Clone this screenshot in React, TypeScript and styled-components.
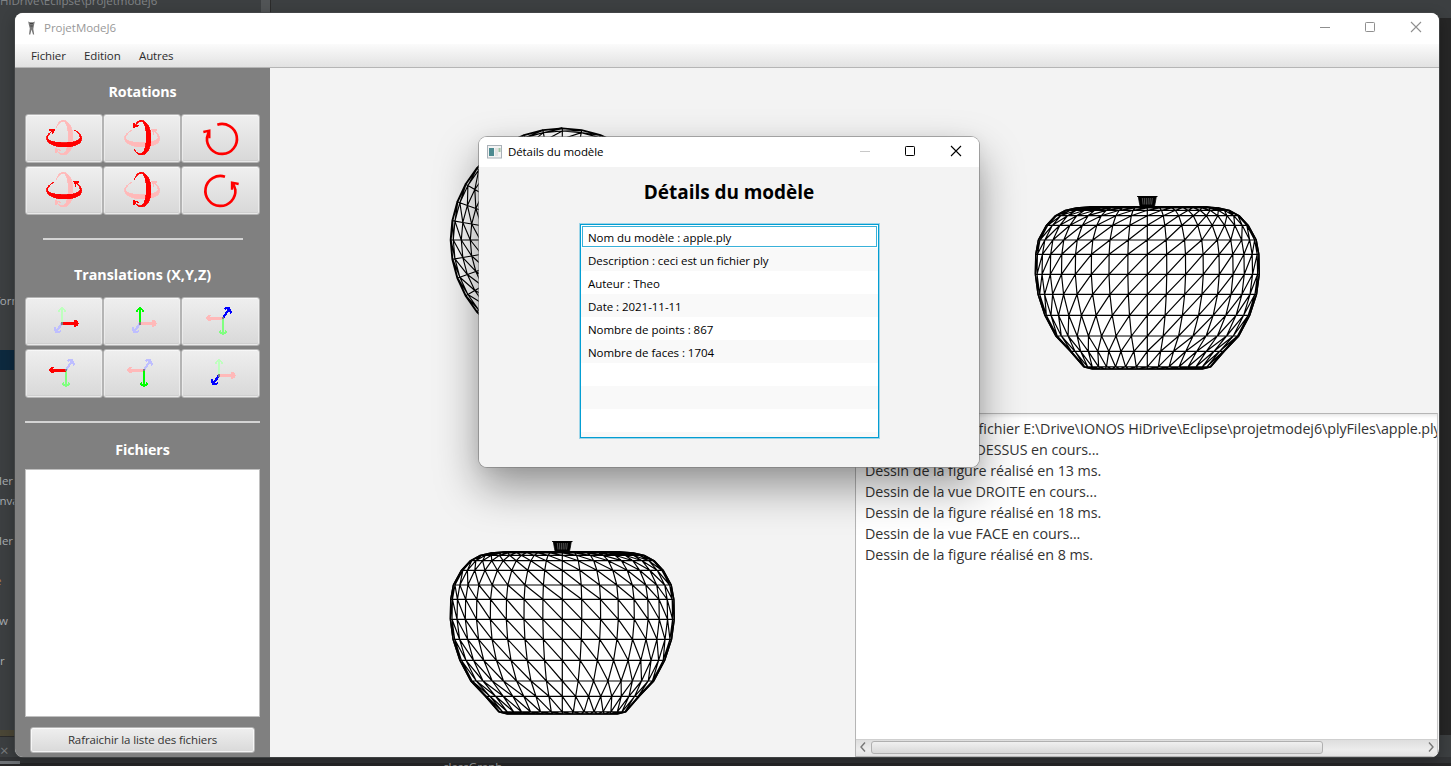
import React from "react";
import styled, { createGlobalStyle } from "styled-components";

const GlobalStyle = createGlobalStyle`
  * { box-sizing: border-box; }
  body { margin: 0; overflow: hidden; font-family: "Open Sans", "Noto Sans", sans-serif; }
`;

/* ---------- desktop behind the windows ---------- */

const Desktop = styled.div`
  position: relative;
  width: 1451px;
  height: 766px;
  overflow: hidden;
  background: #3c3f41;
`;

const BackPanel = styled.div<{ $x: number; $y: number; $w: number; $h: number; $c: string }>`
  position: absolute;
  left: ${(p) => p.$x}px;
  top: ${(p) => p.$y}px;
  width: ${(p) => p.$w}px;
  height: ${(p) => p.$h}px;
  background: ${(p) => p.$c};
`;

const BackText = styled.span<{ $x: number; $y: number; $c?: string; $size?: number }>`
  position: absolute;
  left: ${(p) => p.$x}px;
  top: ${(p) => p.$y}px;
  line-height: 16px;
  white-space: nowrap;
  font-size: ${(p) => p.$size ?? 11.5}px;
  color: ${(p) => p.$c ?? "#a9adb0"};
`;

/* ---------- main window ---------- */

const Window = styled.main`
  position: absolute;
  left: 15px;
  top: 13px;
  width: 1424px;
  height: 744px;
  display: flex;
  flex-direction: column;
  overflow: hidden;
  border-radius: 8px;
  background: #f3f3f3;
`;

const WindowShade = styled.div`
  position: absolute;
  left: 15px;
  top: 13px;
  width: 1424px;
  height: 744px;
  border-radius: 8px;
  box-shadow: 0 0 0 1px rgba(70, 72, 74, 0.8), 0 4px 14px rgba(0, 0, 0, 0.3);
`;

const TitleBar = styled.header<{ $h: number; $pb?: number }>`
  flex: none;
  height: ${(p) => p.$h}px;
  padding-bottom: ${(p) => p.$pb ?? 0}px;
  display: flex;
  align-items: center;
  background: #fff;
`;

const WindowTitle = styled.span<{ $active?: boolean }>`
  flex: 1;
  font-size: 11.5px;
  line-height: 16px;
  letter-spacing: ${(p) => (p.$active ? "-0.1px" : "-0.02px")};
  color: ${(p) => (p.$active ? "#000" : "#999")};
`;

const Controls = styled.div`
  display: flex;
  svg { display: block; }
`;

const MenuBar = styled.nav`
  flex: none;
  height: 24px;
  display: flex;
  gap: 18px;
  padding: 0 16px;
  background: linear-gradient(#fbfbfb, #e2e2e2);
  border-bottom: 1px solid #b5b5b5;
`;

const MenuItem = styled.span<{ $w: number }>`
  width: ${(p) => p.$w}px;
  font-size: 11.5px;
  line-height: 24px;
  white-space: nowrap;
  letter-spacing: -0.1px;
  color: #2c2c2c;
`;

const Body = styled.div`
  flex: 1;
  min-height: 0;
  display: flex;
`;

const Sidebar = styled.aside`
  flex: none;
  width: 255px;
  padding: 12px 10px 4px;
  display: flex;
  flex-direction: column;
  align-items: center;
  background: #808080;
`;

const Heading = styled.h2<{ $mb: number; $ls?: number }>`
  margin: 0 0 ${(p) => p.$mb}px;
  height: 24px;
  font-size: 14.3px;
  line-height: 24px;
  font-weight: 700;
  letter-spacing: ${(p) => p.$ls ?? -0.1}px;
  color: #fff;
`;

const ButtonGrid = styled.div`
  display: grid;
  grid-template-columns: 78px 78px 79px;
  row-gap: 3px;
`;

const ToolButton = styled.button`
  height: 49px;
  padding: 0;
  border: 1px solid #b4b4b4;
  border-radius: 3px;
  background: linear-gradient(#efefef, #d8d8d8);
  box-shadow: inset 0 0 0 1px rgba(255, 255, 255, 0.55), inset 0 -1px 0 1px rgba(180, 180, 180, 0.25);
  svg { display: block; margin: -1px; }
`;

const Separator = styled.hr<{ $w: number; $mt: number; $mb: number }>`
  flex: none;
  width: ${(p) => p.$w}px;
  height: 2px;
  margin: ${(p) => p.$mt}px 0 ${(p) => p.$mb}px;
  border: 0;
  background: #d4d4d4;
`;

const FileList = styled.div`
  width: 235px;
  height: 248px;
  border: 1px solid #c0c0c0;
  background: #fff;
`;

const RefreshButton = styled.button`
  width: 225px;
  height: 26px;
  margin-top: 10px;
  padding: 0 0 2px;
  border: 1px solid #b4b4b4;
  border-radius: 3px;
  background: linear-gradient(#efefef, #d9d9d9);
  box-shadow: inset 0 0 0 1px rgba(255, 255, 255, 0.7);
  font-family: inherit;
  font-size: 11.5px;
  letter-spacing: -0.1px;
  color: #333;
`;

const Views = styled.section`
  flex: 1;
  display: grid;
  grid-template-columns: 585px 584px;
  grid-template-rows: 345px 344px;
`;

const View = styled.div`
  overflow: hidden;
  svg { display: block; }
`;

const Console = styled.div`
  display: flex;
  flex-direction: column;
  margin-right: 1px;
  border: 1px solid #b5b5b5;
  border-right-color: #c8c8c8;
  background: #fff;
  overflow: hidden;
`;

const Log = styled.div`
  flex: 1;
  padding: 4px 0 0 9px;
  overflow: hidden;
  box-shadow: inset 0 4px 4px -3px rgba(0, 0, 0, 0.14);
`;

const LogLine = styled.div<{ $indent?: number }>`
  height: 21px;
  padding-left: ${(p) => p.$indent ?? 0}px;
  font-size: 14.3px;
  line-height: 21px;
  white-space: pre;
  letter-spacing: -0.06px;
  color: #333;
`;

const ScrollBar = styled.div`
  flex: none;
  height: 17px;
  display: flex;
  align-items: center;
  justify-content: space-between;
  padding: 0 3px 2px 4px;
  border-top: 1px solid #cfcfcf;
  background: linear-gradient(#dedede, #ececec 60%, #e2e2e2);
`;

const ScrollTrack = styled.div`
  flex: 1;
  margin: 0 5px;
`;

const ScrollThumb = styled.div`
  width: 452px;
  height: 13px;
  border: 1px solid #b0b0b0;
  border-radius: 3px;
  background: linear-gradient(#f0f0f0, #d8d8d8);
`;

/* ---------- dialog ---------- */

const Dialog = styled.section`
  position: absolute;
  left: 479px;
  top: 137px;
  width: 500px;
  height: 330px;
  display: flex;
  flex-direction: column;
  align-items: stretch;
  border-radius: 8px;
  overflow: hidden;
  background: #f3f3f3;
`;

const DialogShade = styled.div`
  position: absolute;
  left: 479px;
  top: 137px;
  width: 500px;
  height: 330px;
  border-radius: 8px;
  box-shadow: 0 0 0 1px rgba(120, 120, 120, 0.6), 0 20px 44px rgba(0, 0, 0, 0.4), 0 2px 16px rgba(0, 0, 0, 0.06);
`;

const DialogHeading = styled.h1`
  margin: 10px 0 17px;
  font-size: 19px;
  line-height: 30px;
  font-weight: 700;
  text-align: center;
  letter-spacing: -0.05px;
  color: #000;
`;

const DetailList = styled.ul`
  width: 299px;
  height: 214px;
  margin: 0 0 0 101px;
  padding: 0;
  list-style: none;
  overflow: hidden;
  border: 1px solid #039ed3;
  box-shadow: 0 0 0 1px rgba(3, 158, 211, 0.35);
  background: #fff;
`;

const DetailRow = styled.li<{ $odd: boolean; $focused: boolean }>`
  height: 23px;
  padding: 1px;
  background: ${(p) => (p.$odd ? "#f9f9f9" : "#fff")};
  span {
    display: block;
    height: 21px;
    padding-left: 5px;
    border: 1px solid ${(p) => (p.$focused ? "#39b1d9" : "transparent")};
    font-size: 11.5px;
    line-height: 22px;
    letter-spacing: -0.04px;
    color: #000;
  }
`;

/* ---------- wireframe model ---------- */

type Ring = [number, number];

/* height and radius of each ring of the apple, top to bottom */
const RINGS: Ring[] = [
  [21.8, 58], [22.8, 71], [25.3, 82], [30.7, 92], [40.3, 101],
  [55, 109], [69.3, 111.6], [89.3, 112], [109.3, 109.3], [130.3, 102.5],
  [151, 91.5], [166.3, 77], [181.8, 63.5], [184, 55],
];

const STEP = Math.PI / 18;
const fx = (n: number) => n.toFixed(2);

function sidePath(cx: number, top: number, dir: 1 | -1) {
  let d = "";
  const x = (r: number, j: number) => cx + dir * r * Math.sin(j * STEP);
  RINGS.forEach(([y, r], i) => {
    d += `M${fx(cx - r)} ${fx(top + y)}H${fx(cx + r)}`;
    const next = RINGS[i + 1];
    if (!next) return;
    for (let j = -9; j <= 9; j++) {
      d += `M${fx(x(r, j))} ${fx(top + y)}L${fx(x(next[1], j))} ${fx(top + next[0])}`;
      if (j > -9) d += `M${fx(x(r, j))} ${fx(top + y)}L${fx(x(next[1], j - 1))} ${fx(top + next[0])}`;
    }
  });
  return d;
}

function sideOutline(cx: number, top: number) {
  const right = RINGS.map(([y, r]) => `${fx(cx + r)} ${fx(top + y)}`);
  const left = [...RINGS].reverse().map(([y, r]) => `${fx(cx - r)} ${fx(top + y)}`);
  return `M${right.join("L")}L${left.join("L")}Z`;
}

function AppleSide({ cx, top, dir }: { cx: number; top: number; dir: 1 | -1 }) {
  const t = top + 11.5;
  const ribs = [-5, -3, -1, 1, 3, 5];
  return (
    <g fill="none" stroke="#000">
      <path d={sideOutline(cx, top)} fill="#fff" strokeWidth="1.3" />
      <path d={sidePath(cx, top, dir)} strokeWidth="1.2" />
      <path d={`M${cx - 58} ${top + 21.8}H${cx + 58}`} strokeWidth="1.6" />
      <path d={`M${cx - 10.2} ${t}H${cx + 10.2}`} strokeWidth="1" />
      <path d={`M${cx - 9} ${t}H${cx + 9}L${cx + 7.8} ${t + 7}L${cx + 7} ${t + 10.5}H${cx - 7}L${cx - 7.8} ${t + 7}Z`} fill="#000" strokeWidth="0.8" />
      {ribs.map((r) => (
        <path key={r} d={`M${cx + r} ${t + 1.5}L${cx + r * 0.85} ${t + 8}`} stroke="#8a8a8a" strokeWidth="0.6" />
      ))}
    </g>
  );
}

function AppleTop({ cx, cy }: { cx: number; cy: number }) {
  const radii = [112, 111.2, 109, 101, 92, 82, 71, 58, 44, 30, 18];
  const pt = (r: number, j: number) => `${fx(cx + r * Math.cos(j * STEP))} ${fx(cy + r * Math.sin(j * STEP))}`;
  let d = "";
  radii.forEach((r, i) => {
    d += "M" + Array.from({ length: 36 }, (_, j) => pt(r, j)).join("L") + "Z";
    const next = radii[i + 1];
    if (next === undefined) return;
    for (let j = 0; j < 36; j++) d += `M${pt(r, j)}L${pt(next, j)}M${pt(r, j)}L${pt(next, j - 1)}`;
  });
  return (
    <>
      <circle cx={cx} cy={cy} r={111.5} fill="#fff" />
      <path d={d} fill="none" stroke="#000" strokeWidth="1.15" />
    </>
  );
}

/* ---------- tool icons ---------- */

const RED = "#ff0000";
const PINK = "#ffb9b9";

const Glyph = ({ children, smooth }: { children: React.ReactNode; smooth?: boolean }) => (
  <svg width="78" height="49" viewBox="0 0 234 147" fill="none" shapeRendering={smooth ? "auto" : "crispEdges"}>{children}</svg>
);

function FlatOrbit({ color, arrow }: { color: string; arrow: "left" | "right" }) {
  return (
    <g>
      <path fill={color} stroke={color} strokeWidth="2.5" d="M87 48C74 54 63 64 65 76C68 92 95 99 117 99C145 99 170 92 170 74C170 62 158 53 148 48C158 56 167 64 165 72C162 81 145 86 117 86C90 86 70 81 68 72C67 62 78 54 87 48Z" />
      <path stroke={color} strokeWidth="4" d={arrow === "left" ? "M73 48H87L82 61M74 49L84 53" : "M162 48H148L153 61M161 49L151 53"} />
    </g>
  );
}

function TallOrbit({ color, arrow }: { color: string; arrow: "top" | "bottom" }) {
  return (
    <g>
      <path fill={color} stroke={color} strokeWidth="2.5" d="M94 41C98 26 106 19 115 19C132 19 144 45 144 72C144 98 134 123 116 123C104 123 97 116 94 104C98 115 106 121 115 119C125 114 130 95 130 70C130 45 125 24 115 22C107 22 100 30 94 41Z" />
      <path stroke={color} strokeWidth="4" d={arrow === "top" ? "M92 26V40L107 34M92 28L98 38" : "M92 118V104L107 109M92 116L98 106"} />
    </g>
  );
}

const Spin = ({ ccw }: { ccw?: boolean }) => (
  <Glyph smooth>
    {ccw ? (
      <g stroke={RED} strokeWidth="8">
        <path d="M132 32A45 45 0 1 0 163 71L157 54" />
        <path d="M173 54L153 50V71" strokeWidth="7" />
      </g>
    ) : (
      <g stroke={RED} strokeWidth="8">
        <path d="M109 32A45 45 0 1 1 78 71L83 54" />
        <path d="M67 54L85 50V73" strokeWidth="7" />
      </g>
    )}
  </Glyph>
);

type Dir = "up" | "down" | "left" | "right" | "ne" | "sw";
const ARROWS: Record<Dir, { dx: number; dy: number; wings: string }> = {
  up: { dx: 0, dy: -45, wings: "M-10 11L-7 4L0 0L7 4L10 11" },
  down: { dx: 0, dy: 48, wings: "M-10 -9L-6 -3L0 0L6 -3L10 -9" },
  left: { dx: -47, dy: 0, wings: "M10 -9L3 -5L0 0L3 5L10 9" },
  right: { dx: 47, dy: 0, wings: "M-10 -9L-3 -5L0 0L-3 5L-10 9" },
  ne: { dx: 19, dy: -28, wings: "M-15 1L-9 -2H-1L2 5L6 14" },
  sw: { dx: -18, dy: 26, wings: "M-3 -14L-2 -5L0 0L8 0L15 -3" },
};

function Axes({ x, y, axes }: { x: number; y: number; axes: [Dir, string][] }) {
  return (
    <Glyph>
      {axes.map(([dir, color]) => {
        const a = ARROWS[dir];
        return (
          <g key={dir} stroke={color} strokeWidth={dir === "left" || dir === "right" ? 9 : 7}>
            <path d={`M${x} ${y}l${a.dx} ${a.dy}`} />
            <path d={a.wings} strokeWidth="6" transform={`translate(${x + a.dx} ${y + a.dy})`} />
          </g>
        );
      })}
      <rect x={x - 3} y={y - 3} width="7" height="7" fill="#808080" />
    </Glyph>
  );
}

const PALE_GREEN = "#beffbe";
const LIGHT_GREEN = "#80ff80";
const GREEN = "#00ff00";
const PALE_BLUE = "#bebeff";
const BLUE = "#0000ff";

const rotationIcons = [
  <Glyph key="a"><TallOrbit color={PINK} arrow="bottom" /><FlatOrbit color={RED} arrow="left" /></Glyph>,
  <Glyph key="b"><FlatOrbit color={PINK} arrow="right" /><TallOrbit color={RED} arrow="top" /></Glyph>,
  <Spin key="c" />,
  <Glyph key="d"><TallOrbit color={PINK} arrow="bottom" /><FlatOrbit color={RED} arrow="right" /></Glyph>,
  <Glyph key="e"><FlatOrbit color={PINK} arrow="right" /><TallOrbit color={RED} arrow="bottom" /></Glyph>,
  <Spin key="f" ccw />,
];

const translationIcons = [
  <Axes key="a" x={111} y={79} axes={[["up", PALE_GREEN], ["sw", PALE_BLUE], ["right", RED]]} />,
  <Axes key="b" x={111} y={79} axes={[["right", PINK], ["sw", PALE_BLUE], ["up", GREEN]]} />,
  <Axes key="c" x={126} y={63} axes={[["left", PINK], ["down", LIGHT_GREEN], ["ne", BLUE]]} />,
  <Axes key="d" x={123} y={63} axes={[["ne", PALE_BLUE], ["down", LIGHT_GREEN], ["left", RED]]} />,
  <Axes key="e" x={123} y={63} axes={[["ne", PALE_BLUE], ["left", PINK], ["down", GREEN]]} />,
  <Axes key="f" x={114} y={79} axes={[["up", PALE_GREEN], ["right", PINK], ["sw", BLUE]]} />,
];

function CaptionButtons({ color, minColor }: { color: string; minColor: string }) {
  return (
    <Controls>
      <svg width="46" height="30" fill="none"><path d="M18 14.5H28" stroke={minColor} /></svg>
      <svg width="45" height="30" fill="none"><rect x="17.5" y="9.5" width="9" height="9" rx="0.8" stroke={color} /></svg>
      <svg width="46" height="30" fill="none"><path d="M18 9L28 19M28 9L18 19" stroke={color} strokeWidth="1.1" /></svg>
    </Controls>
  );
}

const AppIcon = styled.svg<{ $ml: number; $mr: number }>`
  flex: none;
  margin-left: ${(p) => p.$ml}px;
  margin-right: ${(p) => p.$mr}px;
`;

const details = [
  "Nom du modèle : apple.ply",
  "Description : ceci est un fichier ply",
  "Auteur : Theo",
  "Date : 2021-11-11",
  "Nombre de points : 867",
  "Nombre de faces : 1704",
  "", "", "", "",
];

const log = [
  "Dessin de la vue DESSUS en cours...",
  "Dessin de la figure réalisé en 13 ms.",
  "Dessin de la vue DROITE en cours...",
  "Dessin de la figure réalisé en 18 ms.",
  "Dessin de la vue FACE en cours...",
  "Dessin de la figure réalisé en 8 ms.",
];

export default function App() {
  return (
    <>
      <GlobalStyle />
      <Desktop>
        <BackPanel $x={261} $y={0} $w={9} $h={13} $c="#515456" />
        <BackPanel $x={270} $y={0} $w={1} $h={13} $c="#2b2b2b" />
        <BackPanel $x={1439} $y={18} $w={12} $h={717} $c="#262626" />
        <BackPanel $x={0} $y={350} $w={15} $h={20} $c="#0d293e" />
        <BackPanel $x={0} $y={730} $w={15} $h={6} $c="#4a4636" />
        <BackPanel $x={0} $y={736} $w={15} $h={1} $c="#2b2b2b" />
        <BackPanel $x={0} $y={757} $w={1451} $h={6} $c="#323436" />
        <BackPanel $x={0} $y={763} $w={1451} $h={3} $c="#262627" />
        <BackPanel $x={0} $y={761} $w={20} $h={3} $c="#6e7276" />
        <BackText $x={0} $y={-7} $c="#808386">HiDrive\Eclipse\projetmodej6</BackText>
        <BackText $x={-4} $y={293}>form</BackText>
        <BackText $x={-1} $y={473}>ler</BackText>
        <BackText $x={-7} $y={493}>anvas</BackText>
        <BackText $x={-1} $y={533}>ler</BackText>
        <BackText $x={-5} $y={573} $c="#b08050">e</BackText>
        <BackText $x={-1} $y={613}>w</BackText>
        <BackText $x={0} $y={653}>r</BackText>
        <BackText $x={0} $y={742} $size={15} $c="#777a7c">×</BackText>
        <BackText $x={440} $y={759} $c="#a0a0a0">.classGraph</BackText>
        <WindowShade />

        <Window>
          <TitleBar $h={31} $pb={2}>
            <AppIcon $ml={10} $mr={6} width="13" height="16" viewBox="0 0 13 16">
              <path d="M3.2 1.5L5 2.3H8L9.8 1.5L9 5L8.3 9L9.2 14.5H8L6.5 9.5L5.3 14.5H4L4.8 8.5L3.8 4.5Z" fill="#777" />
              <path d="M5 3.5H8M5.3 6H7.8" stroke="#444" strokeWidth="1.2" />
            </AppIcon>
            <WindowTitle>ProjetModeJ6</WindowTitle>
            <CaptionButtons color="#8f8f8f" minColor="#8f8f8f" />
          </TitleBar>
          <MenuBar>
            <MenuItem $w={35}>Fichier</MenuItem>
            <MenuItem $w={37}>Edition</MenuItem>
            <MenuItem $w={35}>Autres</MenuItem>
          </MenuBar>
          <Body>
            <Sidebar>
              <Heading $mb={10}>Rotations</Heading>
              <ButtonGrid>
                {rotationIcons.map((icon, i) => <ToolButton key={i}>{icon}</ToolButton>)}
              </ButtonGrid>
              <Separator $w={200} $mt={23} $mb={23} />
              <Heading $mb={10} $ls={0}>Translations (X,Y,Z)</Heading>
              <ButtonGrid>
                {translationIcons.map((icon, i) => <ToolButton key={i}>{icon}</ToolButton>)}
              </ButtonGrid>
              <Separator $w={235} $mt={23} $mb={15} />
              <Heading $mb={7}>Fichiers</Heading>
              <FileList />
              <RefreshButton>Rafraichir la liste des fichiers</RefreshButton>
            </Sidebar>
            <Views>
              <View>
                <svg width="585" height="345"><AppleTop cx={292.3} cy={172} /></svg>
              </View>
              <View>
                <svg width="584" height="345"><AppleSide cx={292.3} top={117} dir={1} /></svg>
              </View>
              <View>
                <svg width="585" height="344"><AppleSide cx={292.3} top={117} dir={-1} /></svg>
              </View>
              <Console>
                <Log>
                  <LogLine $indent={7}>{"Chargement du fichier E:\\Drive\\IONOS HiDrive\\Eclipse\\projetmodej6\\plyFiles\\apple.ply"}</LogLine>
                  {log.map((line) => <LogLine key={line}>{line}</LogLine>)}
                </Log>
                <ScrollBar>
                  <svg width="6" height="10" fill="none"><path d="M5 0.5L1 5L5 9.5" stroke="#777" strokeWidth="1.4" /></svg>
                  <ScrollTrack><ScrollThumb /></ScrollTrack>
                  <svg width="6" height="10" fill="none"><path d="M1 0.5L5 5L1 9.5" stroke="#777" strokeWidth="1.4" /></svg>
                </ScrollBar>
              </Console>
            </Views>
          </Body>
        </Window>

        <DialogShade />
        <Dialog>
          <TitleBar $h={30}>
            <AppIcon $ml={8} $mr={6} width="15" height="14" viewBox="0 0 15 14">
              <rect x="0.5" y="0.5" width="14" height="12.5" fill="#f3f3f3" stroke="#a9b1b8" />
              <rect x="2" y="3" width="5" height="8" fill="#4c8a90" />
              <rect x="8" y="3" width="3" height="8" fill="#e2e2e2" />
              <rect x="11.5" y="3" width="2" height="4" fill="#9fc3a4" />
            </AppIcon>
            <WindowTitle $active>Détails du modèle</WindowTitle>
            <CaptionButtons color="#000" minColor="#c8c8c8" />
          </TitleBar>
          <DialogHeading>Détails du modèle</DialogHeading>
          <DetailList>
            {details.map((text, i) => (
              <DetailRow key={i} $odd={i % 2 === 1} $focused={i === 0}><span>{text}</span></DetailRow>
            ))}
          </DetailList>
        </Dialog>
      </Desktop>
    </>
  );
}
